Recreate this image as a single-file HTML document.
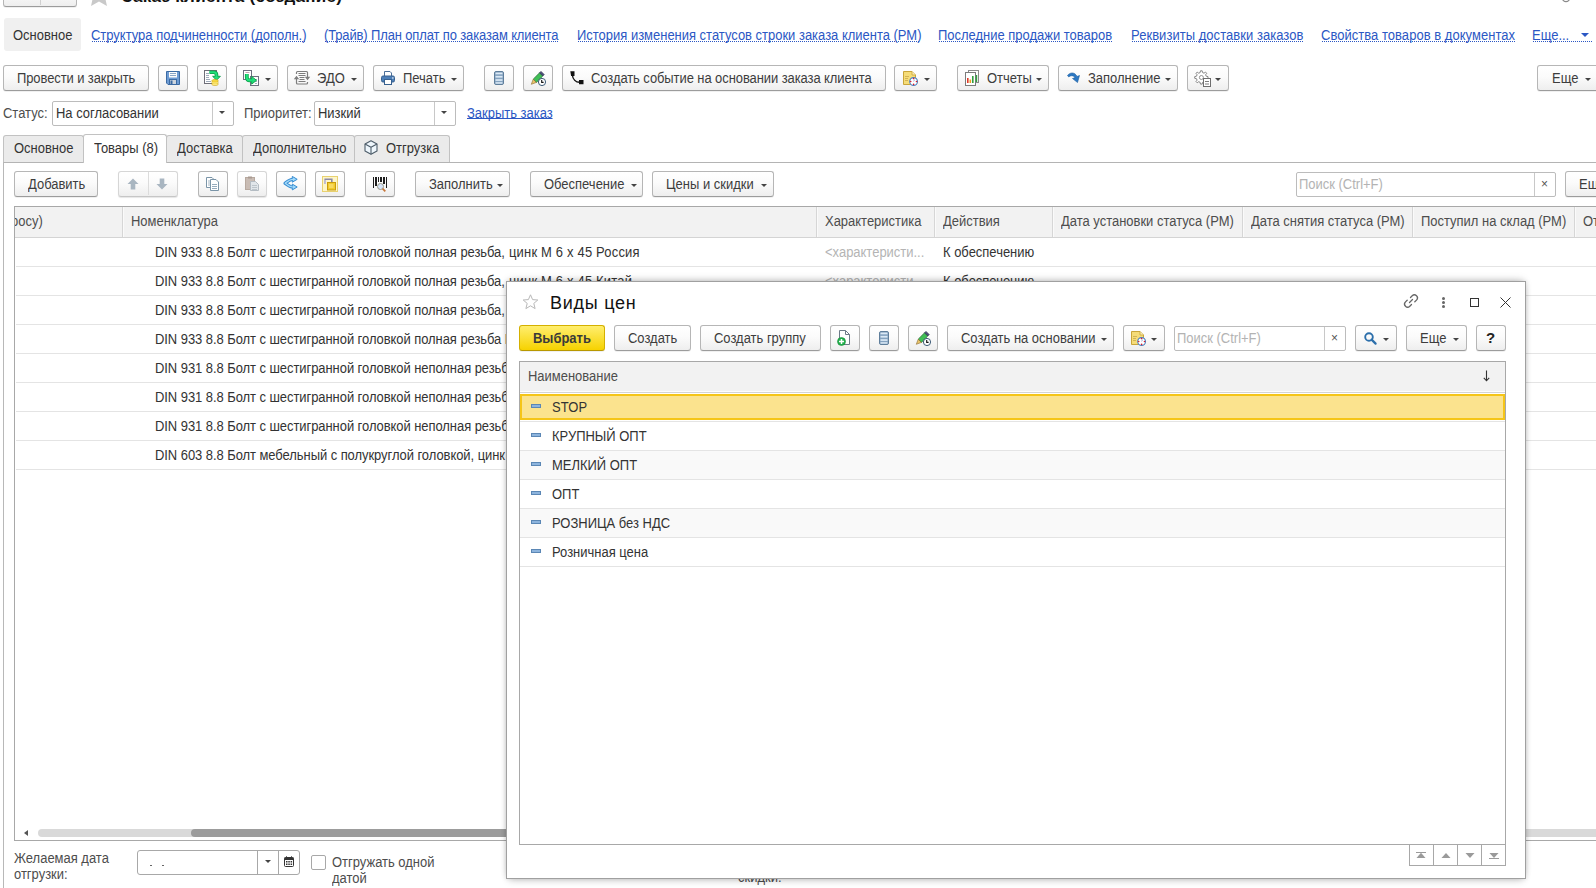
<!DOCTYPE html>
<html><head><meta charset="utf-8">
<style>
html,body{margin:0;padding:0;background:#fff;width:1596px;height:888px;overflow:hidden;font-family:"Liberation Sans",sans-serif;}
#root{position:relative;width:1596px;height:888px;overflow:hidden;background:#fff;}
.t{position:absolute;font-size:13.8px;line-height:15px;color:#333;white-space:nowrap;transform:scaleX(0.94);transform-origin:0 0;}
.nt{transform:none;}
.lb{color:#4d4d4d;}
.lnk{position:absolute;height:13px;font-size:13.8px;line-height:15px;transform:scaleX(0.94);transform-origin:0 0;color:#2b57c4;white-space:nowrap;}
.ul{position:absolute;height:1px;background:repeating-linear-gradient(90deg,#2b57c4 0 1px,transparent 1px 2px);}
.b{position:absolute;box-sizing:border-box;height:26px;border:1px solid #b6b6b6;border-bottom-color:#9c9c9c;border-radius:3px;background:linear-gradient(#fff 0%,#fbfbfb 45%,#eeeeee 100%);box-shadow:0 1px 0 rgba(0,0,0,.06);}
.dis{border-color:#d6d6d6;border-bottom-color:#c6c6c6;box-shadow:0 1px 1px rgba(0,0,0,.10);}
.ar{position:absolute;width:0;height:0;border-left:3px solid transparent;border-right:3px solid transparent;border-top:3px solid #444;}
.hl{position:absolute;height:1px;background:#e3e3e3;}
.vl{position:absolute;width:1px;}
svg{position:absolute;overflow:visible;}
</style></head><body><div id="root">

<!-- ===== top (cropped header) ===== -->
<div class="b" style="left:3px;top:-19px;width:74px;height:26px;"></div>
<div class="vl" style="left:40px;top:-5px;height:10px;background:#d0d0d0;"></div>
<svg style="left:86px;top:-18px" width="26" height="24" viewBox="0 0 17 16"><path d="M8.5 0L11 5.5L17 6L12.5 10L13.8 16L8.5 13L3.2 16L4.5 10L0 6L6 5.5Z" fill="#c9c9c9"/></svg>
<div class="t nt" style="left:122px;top:-14px;font-size:17px;line-height:22px;font-weight:bold;color:#111;letter-spacing:0.28px">Заказ клиента (создание)</div>

<svg style="left:1561px;top:-6px" width="10" height="9" viewBox="0 0 10 9"><circle cx="5" cy="4" r="3.6" fill="none" stroke="#8a8a8a" stroke-width="1.3"/></svg>
<!-- ===== section links row ===== -->
<div style="position:absolute;left:4px;top:18px;width:77px;height:33px;background:#f0f0f0;border-radius:3px"></div>
<div class="t" style="left:13px;top:28px">Основное</div>
<div class="lnk" style="left:91px;top:28px">Структура подчиненности (дополн.)</div>
<div class="lnk" style="left:324px;top:28px;letter-spacing:-0.13px">(Трайв) План оплат по заказам клиента</div>
<div class="lnk" style="left:577px;top:28px">История изменения статусов строки заказа клиента (РМ)</div>
<div class="lnk" style="left:938px;top:28px">Последние продажи товаров</div>
<div class="lnk" style="left:1131px;top:28px;letter-spacing:0.06px">Реквизиты доставки заказов</div>
<div class="lnk" style="left:1321px;top:28px;letter-spacing:0.05px">Свойства товаров в документах</div>
<div class="lnk" style="left:1532px;top:28px;width:59px">Еще...</div>
<div class="ar" style="left:1581px;top:33px;border-left-width:4px;border-right-width:4px;border-top:4px solid #2b57c4"></div>

<div class="ul" style="left:92px;top:41px;width:214px"></div>
<div class="ul" style="left:325px;top:41px;width:234px"></div>
<div class="ul" style="left:578px;top:41px;width:342px"></div>
<div class="ul" style="left:939px;top:41px;width:174px"></div>
<div class="ul" style="left:1132px;top:41px;width:171px"></div>
<div class="ul" style="left:1322px;top:41px;width:193px"></div>
<div class="ul" style="left:1533px;top:41px;width:59px"></div>
<!-- ===== main toolbar ===== -->
<div id="tb1">
<div class="b" style="left:3px;top:65px;width:146px"></div>
<div class="t" style="left:17px;top:71px;color:#3d3d3d;letter-spacing:-0.095px">Провести и закрыть</div>
<div class="b" style="left:158px;top:65px;width:30px"></div>
<div class="b" style="left:197px;top:65px;width:30px"></div>
<div class="b" style="left:236px;top:65px;width:42px"></div>
<div class="ar" style="left:265px;top:78px"></div>
<div class="b" style="left:287px;top:65px;width:77px"></div>
<div class="t" style="left:317px;top:71px;color:#3d3d3d">ЭДО</div>
<div class="ar" style="left:351px;top:78px"></div>
<div class="b" style="left:373px;top:65px;width:91px"></div>
<div class="t" style="left:403px;top:71px;color:#3d3d3d">Печать</div>
<div class="ar" style="left:451px;top:78px"></div>
<div class="b" style="left:484px;top:65px;width:30px"></div>
<div class="b" style="left:523px;top:65px;width:30px"></div>
<div class="b" style="left:562px;top:65px;width:324px"></div>
<div class="t" style="left:591px;top:71px;color:#3d3d3d;letter-spacing:-0.076px">Создать событие на основании заказа клиента</div>
<div class="b" style="left:894px;top:65px;width:43px"></div>
<div class="ar" style="left:924px;top:78px"></div>
<div class="b" style="left:957px;top:65px;width:92px"></div>
<div class="t" style="left:987px;top:71px;color:#3d3d3d">Отчеты</div>
<div class="ar" style="left:1036px;top:78px"></div>
<div class="b" style="left:1058px;top:65px;width:120px"></div>
<div class="t" style="left:1088px;top:71px;color:#3d3d3d">Заполнение</div>
<div class="ar" style="left:1165px;top:78px"></div>
<div class="b" style="left:1187px;top:65px;width:42px"></div>
<div class="ar" style="left:1215px;top:78px"></div>
<div class="b" style="left:1537px;top:65px;width:81px"></div>
<div class="t" style="left:1552px;top:71px;color:#3d3d3d">Еще</div>
<div class="ar" style="left:1585px;top:78px"></div>
</div>

<!-- ===== status row ===== -->
<div class="t lb" style="left:3px;top:106px">Статус:</div>
<div style="position:absolute;left:52px;top:101px;width:182px;height:25px;box-sizing:border-box;border:1px solid #bcbcbc;border-radius:2px;background:#fff"></div>
<div class="vl" style="left:212px;top:102px;height:23px;background:#c8c8c8"></div>
<div class="t" style="left:56px;top:106px">На согласовании</div>
<div class="ar" style="left:219px;top:111px"></div>
<div class="t lb" style="left:244px;top:106px">Приоритет:</div>
<div style="position:absolute;left:314px;top:101px;width:142px;height:25px;box-sizing:border-box;border:1px solid #bcbcbc;border-radius:2px;background:#fff"></div>
<div class="vl" style="left:434px;top:102px;height:23px;background:#c8c8c8"></div>
<div class="t" style="left:318px;top:106px">Низкий</div>
<div class="ar" style="left:441px;top:111px"></div>
<div class="t" style="left:467px;top:106px;height:12px;color:#2b57c4;border-bottom:1px solid #2b57c4">Закрыть заказ</div>

<!-- ===== tabs ===== -->
<div class="hl" style="left:3px;top:162px;width:1593px;background:#b4b4b4"></div>
<div class="vl" style="left:3px;top:162px;height:726px;background:#b8b8b8"></div>
<div style="position:absolute;left:3px;top:135px;width:81px;height:27px;box-sizing:border-box;border:1px solid #c2c2c2;border-bottom:none;border-radius:3px 3px 0 0;background:#ebebeb"></div>
<div class="t" style="left:14px;top:141px">Основное</div>
<div style="position:absolute;left:83px;top:134px;width:84px;height:29px;box-sizing:border-box;border:1px solid #c2c2c2;border-bottom:none;border-radius:3px 3px 0 0;background:#fff"></div>
<div class="t" style="left:94px;top:141px">Товары (8)</div>
<div style="position:absolute;left:166px;top:135px;width:77px;height:27px;box-sizing:border-box;border:1px solid #c2c2c2;border-bottom:none;border-radius:3px 3px 0 0;background:#ebebeb"></div>
<div class="t" style="left:177px;top:141px">Доставка</div>
<div style="position:absolute;left:242px;top:135px;width:113px;height:27px;box-sizing:border-box;border:1px solid #c2c2c2;border-bottom:none;border-radius:3px 3px 0 0;background:#ebebeb"></div>
<div class="t" style="left:253px;top:141px">Дополнительно</div>
<div style="position:absolute;left:354px;top:135px;width:96px;height:27px;box-sizing:border-box;border:1px solid #c2c2c2;border-bottom:none;border-radius:3px 3px 0 0;background:#ebebeb"></div>
<div class="t" style="left:386px;top:141px">Отгрузка</div>

<!-- ===== table toolbar ===== -->
<div class="b" style="left:14px;top:171px;width:84px"></div>
<div class="t" style="left:28px;top:177px;color:#3d3d3d">Добавить</div>
<div class="b dis" style="left:118px;top:171px;width:60px"></div>
<div class="vl" style="left:148px;top:172px;height:23px;background:#dcdcdc"></div>
<div class="b" style="left:198px;top:171px;width:30px"></div>
<div class="b dis" style="left:237px;top:171px;width:30px"></div>
<div class="b" style="left:276px;top:171px;width:30px"></div>
<div class="b" style="left:315px;top:171px;width:30px"></div>
<div class="b" style="left:365px;top:171px;width:30px"></div>
<div class="b" style="left:415px;top:171px;width:95px"></div>
<div class="t" style="left:429px;top:177px;color:#3d3d3d">Заполнить</div>
<div class="ar" style="left:497px;top:184px"></div>
<div class="b" style="left:530px;top:171px;width:113px"></div>
<div class="t" style="left:544px;top:177px;color:#3d3d3d">Обеспечение</div>
<div class="ar" style="left:631px;top:184px"></div>
<div class="b" style="left:652px;top:171px;width:122px"></div>
<div class="t" style="left:666px;top:177px;color:#3d3d3d">Цены и скидки</div>
<div class="ar" style="left:761px;top:184px"></div>
<div style="position:absolute;left:1296px;top:172px;width:260px;height:25px;box-sizing:border-box;border:1px solid #bcbcbc;border-radius:2px;background:#fff"></div>
<div class="vl" style="left:1534px;top:173px;height:23px;background:#c8c8c8"></div>
<div class="t" style="left:1299px;top:177px;color:#b3b3b3">Поиск (Ctrl+F)</div>
<div class="t nt" style="left:1541px;top:177px;font-size:12px;color:#555">×</div>
<div class="b" style="left:1565px;top:171px;width:61px"></div>
<div class="t" style="left:1579px;top:177px;color:#3d3d3d">Еще</div>

<!-- ===== main table ===== -->
<div style="position:absolute;left:14px;top:206px;width:1600px;height:635px;box-sizing:border-box;border:1px solid #a8a8a8;background:#fff"></div>
<div style="position:absolute;left:15px;top:207px;width:1590px;height:30px;background:#f2f2f2;border-bottom:1px solid #d4d4d4"></div>

<div class="vl" style="left:122px;top:207px;height:30px;background:#d6d6d6"></div>
<div class="vl" style="left:123px;top:207px;height:30px;background:#fafafa"></div>
<div class="vl" style="left:816px;top:207px;height:30px;background:#d6d6d6"></div>
<div class="vl" style="left:817px;top:207px;height:30px;background:#fafafa"></div>
<div class="vl" style="left:934px;top:207px;height:30px;background:#d6d6d6"></div>
<div class="vl" style="left:935px;top:207px;height:30px;background:#fafafa"></div>
<div class="vl" style="left:1052px;top:207px;height:30px;background:#d6d6d6"></div>
<div class="vl" style="left:1053px;top:207px;height:30px;background:#fafafa"></div>
<div class="vl" style="left:1242px;top:207px;height:30px;background:#d6d6d6"></div>
<div class="vl" style="left:1243px;top:207px;height:30px;background:#fafafa"></div>
<div class="vl" style="left:1412px;top:207px;height:30px;background:#d6d6d6"></div>
<div class="vl" style="left:1413px;top:207px;height:30px;background:#fafafa"></div>
<div class="vl" style="left:1574px;top:207px;height:30px;background:#d6d6d6"></div>
<div class="vl" style="left:1575px;top:207px;height:30px;background:#fafafa"></div>
<div style="position:absolute;left:15px;top:214px;width:40px;height:16px;overflow:hidden"><div class="t lb" style="left:-4px;top:0">росу)</div></div>
<div class="t lb" style="left:131px;top:214px">Номенклатура</div>
<div class="t lb" style="left:825px;top:214px">Характеристика</div>
<div class="t lb" style="left:943px;top:214px">Действия</div>
<div class="t lb" style="left:1061px;top:214px">Дата установки статуса (РМ)</div>
<div class="t lb" style="left:1251px;top:214px">Дата снятия статуса (РМ)</div>
<div class="t lb" style="left:1421px;top:214px">Поступил на склад (РМ)</div>
<div class="t lb" style="left:1583px;top:214px">От</div>
<div class="hl" style="left:16px;top:266px;width:1580px;background:#e4e4e4"></div>
<div class="t" style="left:155px;top:245px;letter-spacing:-0.055px">DIN 933 8.8 Болт с шестигранной головкой полная резьба,</div>
<div class="t" style="left:509px;top:245px;letter-spacing:0.2px">цинк М 6 х 45 Россия</div>
<div class="t" style="left:825px;top:245px;color:#b4b4b4">&lt;характеристи...</div>
<div class="t" style="left:943px;top:245px">К обеспечению</div>
<div class="hl" style="left:16px;top:295px;width:1580px;background:#e4e4e4"></div>
<div class="t" style="left:155px;top:274px;letter-spacing:-0.055px">DIN 933 8.8 Болт с шестигранной головкой полная резьба,</div>
<div class="t" style="left:509px;top:274px;letter-spacing:0.2px">цинк М 6 х 45 Китай</div>
<div class="t" style="left:825px;top:274px;color:#b4b4b4">&lt;характеристи...</div>
<div class="t" style="left:943px;top:274px">К обеспечению</div>
<div class="hl" style="left:16px;top:324px;width:1580px;background:#e4e4e4"></div>
<div class="t" style="left:155px;top:303px;letter-spacing:-0.055px">DIN 933 8.8 Болт с шестигранной головкой полная резьба,</div>
<div class="t" style="left:509px;top:303px;letter-spacing:0.2px">цинк М 8 х 40 Россия</div>
<div class="t" style="left:825px;top:303px;color:#b4b4b4">&lt;характеристи...</div>
<div class="t" style="left:943px;top:303px">К обеспечению</div>
<div class="hl" style="left:16px;top:353px;width:1580px;background:#e4e4e4"></div>
<div class="t" style="left:155px;top:332px;letter-spacing:-0.055px">DIN 933 8.8 Болт с шестигранной головкой полная резьба М 10 х 30 цинк</div>
<div class="t" style="left:825px;top:332px;color:#b4b4b4">&lt;характеристи...</div>
<div class="t" style="left:943px;top:332px">К обеспечению</div>
<div class="hl" style="left:16px;top:382px;width:1580px;background:#e4e4e4"></div>
<div class="t" style="left:155px;top:361px;letter-spacing:-0.055px">DIN 931 8.8 Болт с шестигранной головкой неполная резьба, цинк М 10 х 60</div>
<div class="t" style="left:825px;top:361px;color:#b4b4b4">&lt;характеристи...</div>
<div class="t" style="left:943px;top:361px">К обеспечению</div>
<div class="hl" style="left:16px;top:411px;width:1580px;background:#e4e4e4"></div>
<div class="t" style="left:155px;top:390px;letter-spacing:-0.055px">DIN 931 8.8 Болт с шестигранной головкой неполная резьба, цинк М 12 х 80</div>
<div class="t" style="left:825px;top:390px;color:#b4b4b4">&lt;характеристи...</div>
<div class="t" style="left:943px;top:390px">К обеспечению</div>
<div class="hl" style="left:16px;top:440px;width:1580px;background:#e4e4e4"></div>
<div class="t" style="left:155px;top:419px;letter-spacing:-0.055px">DIN 931 8.8 Болт с шестигранной головкой неполная резьба, цинк М 16 х 90</div>
<div class="t" style="left:825px;top:419px;color:#b4b4b4">&lt;характеристи...</div>
<div class="t" style="left:943px;top:419px">К обеспечению</div>
<div class="hl" style="left:16px;top:469px;width:1580px;background:#e4e4e4"></div>
<div class="t" style="left:155px;top:448px;letter-spacing:-0.055px">DIN 603 8.8 Болт мебельный с полукруглой головкой, цинк М 8 х 50</div>
<div class="t" style="left:825px;top:448px;color:#b4b4b4">&lt;характеристи...</div>
<div class="t" style="left:943px;top:448px">К обеспечению</div>
<div style="position:absolute;left:24px;top:830px;width:0;height:0;border-top:3px solid transparent;border-bottom:3px solid transparent;border-right:4px solid #555"></div>
<div style="position:absolute;left:38px;top:829px;width:1570px;height:8px;border-radius:4px;background:#d9d9d9"></div>
<div style="position:absolute;left:191px;top:829px;width:500px;height:8px;border-radius:4px;background:#9c9c9c"></div>
<!-- ===== bottom fields ===== -->
<div class="t lb" style="left:14px;top:851px;line-height:16px">Желаемая дата<br>отгрузки:</div>

<!-- ===== dialog ===== -->
<svg style="left:166px;top:71px" width="14" height="14" viewBox="0 0 14 14"><path d="M0.5 0.5H13.5V13.5H2L0.5 12Z" fill="#6d9bd3" stroke="#3b6aa3"/><rect x="3" y="1" width="8" height="5.5" fill="#fbfbfb"/><path d="M4 2.5H10M4 4.5H10" stroke="#8aa6c6"/><rect x="3.5" y="8.5" width="7" height="5" fill="#cdd5dd" stroke="#3b6aa3" stroke-width="1"/><rect x="4.5" y="9.5" width="2" height="3.5" fill="#3b6aa3"/></svg>
<svg style="left:204px;top:70px" width="17" height="17" viewBox="0 0 17 17"><rect x="0.5" y="0.5" width="12" height="13" fill="#fff" stroke="#6e6e78"/><path d="M2 3.5H5M2 5.5H5M2 7.5H5M2 9.5H6M2 11.5H7" stroke="#8796a8" stroke-width="0.8"/><path d="M5.5 2.2H9.8Q12.5 2.2 12.5 5V6.5" fill="none" stroke="#0d9a48" stroke-width="3.6"/><path d="M8.6 6.3H16.4L12.5 10.2Z" fill="#1fe07a" stroke="#0d9a48" stroke-width="0.9" stroke-linejoin="round"/><path d="M5.5 2.2H9.8Q12.5 2.2 12.5 5V7" fill="none" stroke="#1fe07a" stroke-width="2"/><ellipse cx="11" cy="10.6" rx="3" ry="1.2" fill="#f6dc4a" stroke="#c9a316" stroke-width="0.6"/><path d="M8 10.6V14.6C8 15.8 14 15.8 14 14.6V10.6" fill="#f3d23a" stroke="#c9a316" stroke-width="0.6"/><path d="M8.2 12.4C9 13.3 13 13.3 13.8 12.4M8.2 14C9 14.9 13 14.9 13.8 14" fill="none" stroke="#fff6b0" stroke-width="0.7"/></svg>
<svg style="left:243px;top:70px" width="17" height="17" viewBox="0 0 17 17"><rect x="0.5" y="0.5" width="8" height="9" fill="#fff" stroke="#6e6e80"/><path d="M2.5 2.5H6.5" stroke="#c8a0b0"/><rect x="7.5" y="6.5" width="8" height="9" fill="#fff" stroke="#6e6e80"/><path d="M12 9.5H14M12 11.5H14M12 13.5H14" stroke="#8c9fb2" stroke-width="0.8"/><path d="M3.8 4V7.2Q3.8 10.3 7 10.3H9" fill="none" stroke="#0d9a48" stroke-width="3.8"/><path d="M8.6 6.4L13.5 10.3L8.6 14.2Z" fill="#1fe07a" stroke="#0d9a48" stroke-width="0.9" stroke-linejoin="round"/><path d="M3.8 4V7.2Q3.8 10.3 7 10.3H9.5" fill="none" stroke="#1fe07a" stroke-width="2.2"/></svg>
<svg style="left:290px;top:68px" width="24" height="20" viewBox="0 0 24 20"><g fill="none" stroke="#7d7d7d" stroke-width="1.2"><path d="M6.5 6V4.5Q6.5 3.5 7.5 3.5H16.5Q17.5 3.5 17.5 4.5V9.5"/><path d="M17.5 14V15Q17.5 16 16.5 16H7.5Q6.5 16 6.5 15V10.5"/><path d="M8.5 5.5H15.5M8.5 7.5H15.5M9.5 9.5H14.5M9.5 11.5H14.5M8.5 13.5H15.5" stroke-width="1"/></g><path d="M3.8 11.2H9.2L6.5 7.8Z M14.8 8.8H20.2L17.5 12.2Z" fill="#7d7d7d"/></svg>
<svg style="left:381px;top:71px" width="14" height="14" viewBox="0 0 14 14"><path d="M3.5 0.5H9L10.5 2V5.5H3.5Z" fill="#fff" stroke="#4b6f99"/><rect x="0.5" y="5" width="13" height="6" rx="1.5" fill="#4d7fb8" stroke="#38618f"/><rect x="3.5" y="8.5" width="7" height="5" fill="#fff" stroke="#38618f"/><rect x="11" y="6.5" width="1.5" height="1" fill="#fff"/></svg>
<svg style="left:494px;top:71px" width="10" height="14" viewBox="0 0 10 14"><rect x="0.5" y="0.5" width="9" height="13" rx="1.5" fill="#85a3c0" stroke="#5f7e9b"/><g fill="#dbe9f5"><rect x="1.5" y="1.6" width="7" height="1.7"/><rect x="1.5" y="4.9" width="7" height="1.7"/><rect x="1.5" y="8.2" width="7" height="1.7"/><rect x="1.5" y="11.2" width="7" height="1.5"/></g></svg>
<svg style="left:530px;top:70px" width="16" height="16" viewBox="0 0 16 16"><path d="M3.2 9.2L9.6 2.8L12.8 6L6.4 12.4Z" fill="#3fbf55" stroke="#2b6e3a" stroke-width="0.8"/><path d="M9.6 2.8L11 1.4L14.2 4.6L12.8 6Z" fill="#4b4f7a" stroke="#30334f" stroke-width="0.7"/><path d="M3.2 9.2L6.4 12.4L1.3 14.3Z" fill="#e9c46a" stroke="#8a6a30" stroke-width="0.6"/><circle cx="12" cy="12" r="3.6" fill="#fff" stroke="#3e5c78" stroke-width="1"/><path d="M11.7 10V12.4H13.6" stroke="#111" stroke-width="1.1" fill="none"/></svg>
<svg style="left:570px;top:71px" width="14" height="14" viewBox="0 0 14 14"><path d="M0.3 0.3H4.5V5H1.1Z M9 9H13.5V13.3H9Z" fill="#111"/><path d="M2.4 4.2C2.8 8.2 5.8 11 9.6 11.3" fill="none" stroke="#111" stroke-width="1.4"/></svg>
<svg style="left:901px;top:70px" width="18" height="17" viewBox="0 0 18 17"><path d="M2.5 1.5H11L14.5 5V14.5H2.5Z" fill="#f5dc78" stroke="#c9a53a"/><path d="M11 1.5V5H14.5" fill="#fbeeb8" stroke="#c9a53a" stroke-width="0.8"/><path d="M4 6.5H8M4 8.5H7M4 10.5H7" stroke="#caa84a" stroke-width="0.8"/><circle cx="12.6" cy="11.5" r="3.9" fill="#fff" stroke="#4a80bf" stroke-width="1.1"/><g fill="#d81e2e"><circle cx="12.6" cy="8.6" r="0.8"/><circle cx="12.6" cy="14.4" r="0.8"/><circle cx="9.7" cy="11.5" r="0.8"/><circle cx="15.5" cy="11.5" r="0.8"/></g><path d="M12.6 11.5L13.6 9.6" stroke="#8a9ad0" stroke-width="0.8"/></svg>
<svg style="left:965px;top:70px" width="16" height="16" viewBox="0 0 16 16"><rect x="3.5" y="0.5" width="10" height="12" fill="#fff" stroke="#8a8a8a"/><rect x="0.5" y="2.5" width="10" height="13" fill="#fff" stroke="#7b7b7b"/><rect x="2" y="8" width="1.6" height="5" fill="#e03a2a"/><rect x="4.5" y="9.5" width="1.6" height="3.5" fill="#f0a020"/><rect x="7" y="6" width="1.6" height="7" fill="#30a040"/><path d="M11.5 5V12" stroke="#30a040" stroke-width="1.4"/></svg>
<svg style="left:1067px;top:71px" width="14" height="14" viewBox="0 0 14 14"><path d="M0.5 4.5C3 1 8 1 10 5.5L12.5 4.5L10.5 11.5L5.5 7.5L8 6.8C6.8 4.5 4 4 1.8 6Z" fill="#2c78c4" stroke="#1d5e9e" stroke-width="0.6"/></svg>
<svg style="left:1194px;top:70px" width="18" height="17" viewBox="0 0 18 17"><path d="M6.5 0.8L8.2 0.8L8.6 2.6L10 3.2L11.5 2.1L12.7 3.3L11.6 4.8L12.2 6.2L14 6.6V8.3L12.2 8.7L11.6 10.1L12.7 11.6L11.5 12.8L10 11.7L8.6 12.3L8.2 14.1H6.5L6.1 12.3L4.7 11.7L3.2 12.8L2 11.6L3.1 10.1L2.5 8.7L0.7 8.3V6.6L2.5 6.2L3.1 4.8L2 3.3L3.2 2.1L4.7 3.2L6.1 2.6Z" fill="#fff" stroke="#7a7a7a" stroke-width="0.9"/><circle cx="7.4" cy="7.5" r="2" fill="none" stroke="#7a7a7a" stroke-width="0.8"/><rect x="9.5" y="8.5" width="7" height="8" fill="#fff" stroke="#6e6e6e"/><path d="M11 11.5H15M11 14H15" stroke="#6e6e6e" stroke-width="0.9"/></svg>
<svg style="left:364px;top:140px" width="14" height="15" viewBox="0 0 14 15"><path d="M7 0.8L13 4V11L7 14.2L1 11V4Z" fill="#eef6fc" stroke="#4e5d6a" stroke-width="1.1" stroke-linejoin="round"/><path d="M1 4L7 7.3L13 4M7 7.3V14.2" fill="none" stroke="#4e5d6a" stroke-width="1.1" stroke-linejoin="round"/></svg>
<svg style="left:127px;top:178px" width="12" height="12" viewBox="0 0 12 12"><path d="M6 0.5L11.5 6H8.3V11.5H3.7V6H0.5Z" fill="#a9b6c1"/></svg>
<svg style="left:156px;top:178px" width="12" height="12" viewBox="0 0 12 12"><path d="M3.7 0.5H8.3V6H11.5L6 11.5L0.5 6H3.7Z" fill="#a9b6c1"/></svg>
<svg style="left:206px;top:177px" width="14" height="14" viewBox="0 0 14 14"><path d="M0.5 0.5H6L8 2.5V10.5H0.5Z" fill="#fff" stroke="#7b95a8"/><path d="M2 4H6M2 6H6M2 8H6" stroke="#8aa3b5" stroke-width="0.8"/><path d="M4.5 2.5H10L12.5 5V13.5H4.5Z" fill="#fff" stroke="#7b95a8"/><path d="M6 7.5H11M6 9.5H11M6 11.5H11" stroke="#8aa3b5" stroke-width="0.9"/></svg>
<svg style="left:245px;top:176px" width="14" height="15" viewBox="0 0 14 15"><rect x="0.5" y="1.5" width="9" height="12" fill="#c9bcb4" stroke="#b7a99f"/><rect x="3" y="0.5" width="4" height="2" fill="#a99a90"/><path d="M5.5 5.5H10.5L13.5 8.5V14.5H5.5Z" fill="#e1e6ea" stroke="#b4bcc3"/><path d="M7 9.5H12M7 11.5H12M7 13.5H12" stroke="#b4bcc3" stroke-width="0.8"/></svg>
<svg style="left:283px;top:176px" width="15" height="15" viewBox="0 0 15 15"><path d="M11.5 3.3H9.5C7 3.3 5 5 2 7.2C5 9.4 7 11 9.5 11H11.5" fill="none" stroke="#3a8ed2" stroke-width="3.2" stroke-linejoin="round"/><path d="M9.3 0.4L14.2 3.3L9.3 6.2Z M9.3 8.1L14.2 11L9.3 13.9Z" fill="#9ad6fa" stroke="#3a8ed2" stroke-width="1" stroke-linejoin="round"/><path d="M11.5 3.3H9.5C7 3.3 5 5 2.2 7.2C5 9.4 7 11 9.5 11H11.5" fill="none" stroke="#a6dcfb" stroke-width="1.2" stroke-linejoin="round"/></svg>
<svg style="left:322px;top:176px" width="16" height="16" viewBox="0 0 16 16"><rect x="0.5" y="0.5" width="15" height="15" fill="#fdf5c8" stroke="#e8d170"/><path d="M3.2 8V3.3H9.8V6" fill="none" stroke="#8d8aa8" stroke-width="1.6"/><path d="M3.2 4V8" stroke="#c9c6e0" stroke-width="1.4"/><rect x="5.5" y="6.5" width="8" height="7.5" fill="#f2cb2c" stroke="#c99c0c"/><rect x="7" y="8" width="4.5" height="4" fill="#f7da60"/></svg>
<svg style="left:373px;top:177px" width="15" height="15" viewBox="0 0 15 15"><g fill="#1e1e1e"><rect x="0" y="0" width="1" height="11"/><rect x="2" y="0" width="2" height="9"/><rect x="5" y="0" width="1" height="5"/><rect x="7" y="0" width="2" height="5"/><rect x="10" y="0" width="2" height="7"/><rect x="13" y="0" width="1" height="11"/></g><circle cx="7.5" cy="9.5" r="3" fill="#d6e4f8" stroke="#9a9a8a" stroke-width="1"/><path d="M9.6 11.6L12.3 14.3" stroke="#c8783c" stroke-width="1.8"/></svg>
<div style="position:absolute;left:137px;top:850px;width:163px;height:25px;box-sizing:border-box;border:1px solid #a8a8a8;border-radius:3px;background:#fff"></div>
<div class="vl" style="left:257px;top:851px;height:23px;background:#a8a8a8"></div>
<div class="vl" style="left:278px;top:851px;height:23px;background:#a8a8a8"></div>
<div style="position:absolute;left:150px;top:865px;width:2px;height:1px;background:#666"></div>
<div style="position:absolute;left:162px;top:865px;width:2px;height:1px;background:#666"></div>
<div class="ar" style="left:265px;top:860px;border-left-width:3px;border-right-width:3px"></div>
<svg style="left:284px;top:856px" width="10" height="11" viewBox="0 0 10 11"><rect x="0.5" y="1.5" width="9" height="9" rx="1" fill="#fff" stroke="#333"/><rect x="0.5" y="1.5" width="9" height="2.5" fill="#333"/><path d="M2.5 0.3V2M7.5 0.3V2" stroke="#333" stroke-width="1"/><g fill="#333"><rect x="2" y="5" width="1.5" height="1.5"/><rect x="4.3" y="5" width="1.5" height="1.5"/><rect x="6.6" y="5" width="1.5" height="1.5"/><rect x="2" y="7.5" width="1.5" height="1.5"/><rect x="4.3" y="7.5" width="1.5" height="1.5"/><rect x="6.6" y="7.5" width="1.5" height="1.5"/></g></svg>
<div style="position:absolute;left:311px;top:855px;width:15px;height:15px;box-sizing:border-box;border:1px solid #a8a8a8;border-radius:2px;background:#fff"></div>
<div class="t lb" style="left:332px;top:855px;line-height:16px">Отгружать одной<br>датой</div>
<div class="t lb" style="left:738px;top:870px">скидки:</div>
<div style="position:absolute;left:506px;top:281px;width:1020px;height:598px;box-sizing:border-box;border:1px solid #a0a0a0;background:#fff;box-shadow:0 -3px 8px -3px rgba(0,0,0,.25),0 4px 8px -3px rgba(0,0,0,.2),0 0 5px rgba(0,0,0,.1)"></div>
<svg style="left:522px;top:294px" width="17" height="16" viewBox="0 0 17 16"><path d="M8.5 0.8 L10.6 5.6 L15.8 6 L11.8 9.4 L13.1 14.6 L8.5 11.8 L3.9 14.6 L5.2 9.4 L1.2 6 L6.4 5.6 Z" fill="none" stroke="#b8b8b8" stroke-width="1"/></svg>
<div class="t nt" style="left:550px;top:293px;font-size:18px;line-height:20px;color:#111;letter-spacing:0.75px">Виды цен</div>
<div class="b" style="left:519px;top:325px;width:86px;border-color:#d4b000;border-bottom-color:#b89800;background:linear-gradient(#ffee6e,#f6d200)"></div>
<div class="t" style="left:533px;top:331px;font-weight:bold;color:#3a3a3a">Выбрать</div>
<div class="b" style="left:614px;top:325px;width:77px"></div>
<div class="t" style="left:628px;top:331px;color:#3d3d3d">Создать</div>
<div class="b" style="left:700px;top:325px;width:121px"></div>
<div class="t" style="left:714px;top:331px;color:#3d3d3d">Создать группу</div>
<div class="b" style="left:830px;top:325px;width:30px"></div>
<div class="b" style="left:869px;top:325px;width:30px"></div>
<div class="b" style="left:908px;top:325px;width:30px"></div>
<div class="b" style="left:947px;top:325px;width:167px"></div>
<div class="t" style="left:961px;top:331px;color:#3d3d3d">Создать на основании</div>
<div class="ar" style="left:1101px;top:338px"></div>
<div class="b" style="left:1123px;top:325px;width:42px"></div>
<div class="ar" style="left:1151px;top:338px"></div>
<div style="position:absolute;left:1174px;top:326px;width:172px;height:25px;box-sizing:border-box;border:1px solid #bcbcbc;border-radius:2px;background:#fff"></div>
<div class="vl" style="left:1324px;top:327px;height:23px;background:#c8c8c8"></div>
<div class="t" style="left:1177px;top:331px;color:#b3b3b3">Поиск (Ctrl+F)</div>
<div class="t nt" style="left:1331px;top:331px;font-size:12px;color:#555">×</div>
<div class="b" style="left:1355px;top:325px;width:42px"></div>
<div class="ar" style="left:1383px;top:338px"></div>
<div class="b" style="left:1406px;top:325px;width:61px"></div>
<div class="t" style="left:1420px;top:331px;color:#3d3d3d">Еще</div>
<div class="ar" style="left:1453px;top:338px"></div>
<div class="b" style="left:1476px;top:325px;width:30px"></div>
<div class="t nt" style="left:1486px;top:330px;font-weight:bold;font-size:15px;color:#222">?</div>
<div style="position:absolute;left:519px;top:361px;width:987px;height:484px;box-sizing:border-box;border:1px solid #a8a8a8;background:#fff"></div>
<div style="position:absolute;left:520px;top:362px;width:985px;height:30px;background:#f2f2f2;border-bottom:1px solid #d4d4d4"></div>
<div class="hl" style="left:520px;top:391px;width:985px;background:#fdfdfd"></div>
<div class="t lb" style="left:528px;top:369px">Наименование</div>
<svg style="left:1483px;top:370px" width="7" height="12" viewBox="0 0 7 12"><path d="M3.5 0.5V10.5M0.8 7.8L3.5 10.8L6.2 7.8" fill="none" stroke="#333" stroke-width="1.1"/></svg>
<div class="hl" style="left:520px;top:421px;width:985px;background:#e4e4e4"></div>
<div style="position:absolute;left:520px;top:394px;width:985px;height:26px;box-sizing:border-box;border:2px solid #f5c518;background:#fbe38e"></div>
<div style="position:absolute;left:531px;top:404px;width:10px;height:4px;box-sizing:border-box;border:1px solid #5b87b5;background:#8db4dd"></div>
<div class="t" style="left:552px;top:400px">STOP</div>
<div class="hl" style="left:520px;top:450px;width:985px;background:#e4e4e4"></div>
<div style="position:absolute;left:531px;top:433px;width:10px;height:4px;box-sizing:border-box;border:1px solid #5b87b5;background:#8db4dd"></div>
<div class="t" style="left:552px;top:429px">КРУПНЫЙ ОПТ</div>
<div style="position:absolute;left:520px;top:451px;width:985px;height:28px;background:#f9f9f9"></div>
<div class="hl" style="left:520px;top:479px;width:985px;background:#e4e4e4"></div>
<div style="position:absolute;left:531px;top:462px;width:10px;height:4px;box-sizing:border-box;border:1px solid #5b87b5;background:#8db4dd"></div>
<div class="t" style="left:552px;top:458px">МЕЛКИЙ ОПТ</div>
<div class="hl" style="left:520px;top:508px;width:985px;background:#e4e4e4"></div>
<div style="position:absolute;left:531px;top:491px;width:10px;height:4px;box-sizing:border-box;border:1px solid #5b87b5;background:#8db4dd"></div>
<div class="t" style="left:552px;top:487px">ОПТ</div>
<div style="position:absolute;left:520px;top:509px;width:985px;height:28px;background:#f9f9f9"></div>
<div class="hl" style="left:520px;top:537px;width:985px;background:#e4e4e4"></div>
<div style="position:absolute;left:531px;top:520px;width:10px;height:4px;box-sizing:border-box;border:1px solid #5b87b5;background:#8db4dd"></div>
<div class="t" style="left:552px;top:516px">РОЗНИЦА без НДС</div>
<div class="hl" style="left:520px;top:566px;width:985px;background:#e4e4e4"></div>
<div style="position:absolute;left:531px;top:549px;width:10px;height:4px;box-sizing:border-box;border:1px solid #5b87b5;background:#8db4dd"></div>
<div class="t" style="left:552px;top:545px">Розничная цена</div>
<div style="position:absolute;left:1409px;top:844px;width:97px;height:22px;box-sizing:border-box;border:1px solid #a8a8a8;background:#fff"></div>
<div class="vl" style="left:1433px;top:845px;height:20px;background:#a8a8a8"></div>
<div class="vl" style="left:1457px;top:845px;height:20px;background:#a8a8a8"></div>
<div class="vl" style="left:1481px;top:845px;height:20px;background:#a8a8a8"></div>
<svg style="left:837px;top:330px" width="14" height="16" viewBox="0 0 14 16"><path d="M2.5 0.5H8.5L12.5 4.5V14.5H2.5Z" fill="#fff" stroke="#6d7a88"/><path d="M8.5 0.5V4.5H12.5" fill="none" stroke="#6d7a88"/><circle cx="4.5" cy="11.5" r="4" fill="#22b14c" stroke="#17893a" stroke-width="0.6"/><path d="M4.5 9V14M2 11.5H7" stroke="#fff" stroke-width="1.5"/></svg>
<svg style="left:879px;top:331px" width="10" height="14" viewBox="0 0 10 14"><rect x="0.5" y="0.5" width="9" height="13" rx="1.5" fill="#85a3c0" stroke="#5f7e9b"/><g fill="#dbe9f5"><rect x="1.5" y="1.6" width="7" height="1.7"/><rect x="1.5" y="4.9" width="7" height="1.7"/><rect x="1.5" y="8.2" width="7" height="1.7"/><rect x="1.5" y="11.2" width="7" height="1.5"/></g></svg>
<svg style="left:915px;top:330px" width="16" height="16" viewBox="0 0 16 16"><path d="M3.2 9.2L9.6 2.8L12.8 6L6.4 12.4Z" fill="#3fbf55" stroke="#2b6e3a" stroke-width="0.8"/><path d="M9.6 2.8L11 1.4L14.2 4.6L12.8 6Z" fill="#4b4f7a" stroke="#30334f" stroke-width="0.7"/><path d="M3.2 9.2L6.4 12.4L1.3 14.3Z" fill="#e9c46a" stroke="#8a6a30" stroke-width="0.6"/><circle cx="12" cy="12" r="3.6" fill="#fff" stroke="#3e5c78" stroke-width="1"/><path d="M11.7 10V12.4H13.6" stroke="#111" stroke-width="1.1" fill="none"/></svg>
<svg style="left:1129px;top:330px" width="18" height="17" viewBox="0 0 18 17"><path d="M2.5 1.5H11L14.5 5V14.5H2.5Z" fill="#f5dc78" stroke="#c9a53a"/><path d="M11 1.5V5H14.5" fill="#fbeeb8" stroke="#c9a53a" stroke-width="0.8"/><path d="M4 6.5H8M4 8.5H7M4 10.5H7" stroke="#caa84a" stroke-width="0.8"/><circle cx="12.6" cy="11.5" r="3.9" fill="#fff" stroke="#4a80bf" stroke-width="1.1"/><g fill="#d81e2e"><circle cx="12.6" cy="8.6" r="0.8"/><circle cx="12.6" cy="14.4" r="0.8"/><circle cx="9.7" cy="11.5" r="0.8"/><circle cx="15.5" cy="11.5" r="0.8"/></g><path d="M12.6 11.5L13.6 9.6" stroke="#8a9ad0" stroke-width="0.8"/></svg>
<svg style="left:1364px;top:332px" width="13" height="13" viewBox="0 0 13 13"><circle cx="5" cy="5" r="3.8" fill="none" stroke="#2c6fab" stroke-width="1.9"/><path d="M7.6 7.6L11.6 11.6" stroke="#2c6fab" stroke-width="2.2" stroke-linecap="round"/></svg>
<svg style="left:1403px;top:293px" width="16" height="16" viewBox="0 0 16 16"><g fill="none" stroke="#666" stroke-width="1.3" stroke-linecap="round"><path d="M6.5 9.5L9.5 6.5"/><path d="M7.5 4.5L9.2 2.8C10.4 1.6 12.3 1.6 13.5 2.8C14.7 4 14.7 5.9 13.5 7.1L11.8 8.8"/><path d="M8.5 11.5L6.8 13.2C5.6 14.4 3.7 14.4 2.5 13.2C1.3 12 1.3 10.1 2.5 8.9L4.2 7.2"/></g></svg>
<div style="position:absolute;left:1442px;top:297px;width:3px;height:3px;border-radius:2px;background:#666"></div>
<div style="position:absolute;left:1442px;top:301px;width:3px;height:3px;border-radius:2px;background:#666"></div>
<div style="position:absolute;left:1442px;top:305px;width:3px;height:3px;border-radius:2px;background:#666"></div>
<div style="position:absolute;left:1470px;top:298px;width:9px;height:9px;box-sizing:border-box;border:1.5px solid #333"></div>
<svg style="left:1500px;top:297px" width="11" height="11" viewBox="0 0 11 11"><path d="M0.5 0.5L10.5 10.5M10.5 0.5L0.5 10.5" stroke="#333" stroke-width="1"/></svg>
<svg style="left:1416px;top:852px" width="10" height="7" viewBox="0 0 10 7"><path d="M0 0.5H10" stroke="#9a9a9a" stroke-width="1"/><path d="M0.5 6L5 0.8L9.5 6Z" fill="#9a9a9a"/></svg>
<svg style="left:1441px;top:852px" width="10" height="7" viewBox="0 0 10 7"><path d="M0.5 6L5 1L9.5 6Z" fill="#9a9a9a"/></svg>
<svg style="left:1465px;top:852px" width="10" height="7" viewBox="0 0 10 7"><path d="M0.5 1H9.5L5 6Z" fill="#9a9a9a"/></svg>
<svg style="left:1489px;top:852px" width="10" height="7" viewBox="0 0 10 7"><path d="M0.5 1H9.5L5 6Z" fill="#9a9a9a"/><path d="M0 6.5H10" stroke="#9a9a9a" stroke-width="1"/></svg>

</div></body></html>
